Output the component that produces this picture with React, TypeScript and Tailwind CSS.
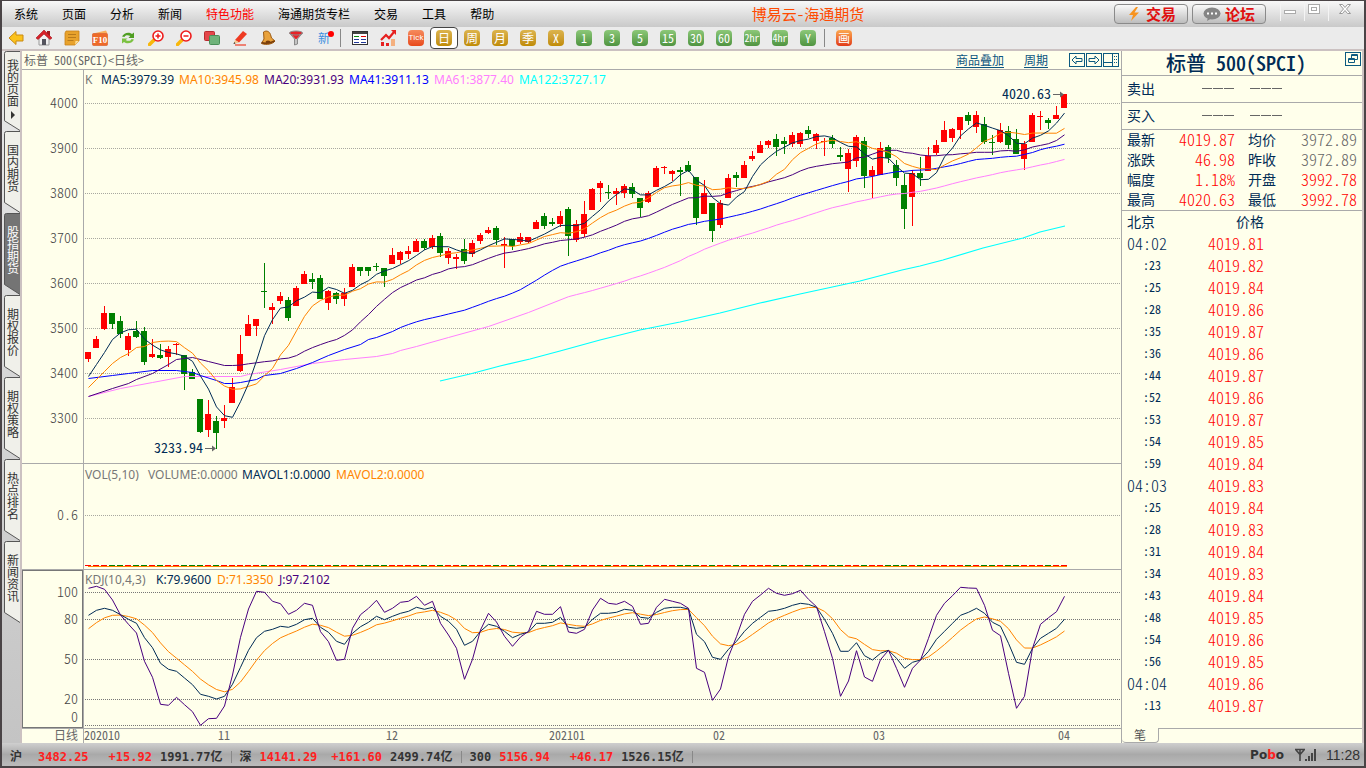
import { useState } from "react";
import type { ReactNode } from "react";

const CJK = "font-['Noto_Sans_CJK_SC',sans-serif] [font-feature-settings:'hwid']";

const UP = "#ff0000";
const DOWN = "#008000";
const NAVY = "#002b55";
const ORANGE = "#ff8400";
const PURPLE = "#48007e";

// high, body top, body bottom, low (chart y) and direction
type Candle = [number, number, number, number, 0 | 1];

const candles: Candle[] = [
  [352, 352, 359, 362, 1], [336, 339, 348, 348, 1], [306, 313, 329, 330, 1], [313, 313, 324, 329, 0],
  [316, 321, 334, 338, 0], [333, 336, 350, 356, 1], [321, 331, 337, 338, 0], [327, 331, 362, 365, 0],
  [339, 354, 357, 358, 1], [344, 355, 358, 359, 0], [346, 349, 357, 367, 1], [343, 344, 345, 355, 1],
  [355, 355, 374, 390, 0], [369, 372, 379, 379, 0], [399, 399, 432, 433, 0], [400, 414, 430, 437, 1],
  [416, 421, 433, 449, 0], [405, 418, 421, 428, 1], [378, 387, 403, 403, 1], [335, 354, 371, 372, 1],
  [315, 324, 336, 336, 1], [319, 319, 326, 336, 1], [263, 291, 292, 308, 0], [303, 307, 310, 324, 1],
  [292, 296, 301, 304, 1], [297, 300, 318, 321, 0], [286, 288, 306, 306, 1], [271, 274, 284, 284, 1],
  [273, 279, 282, 289, 0], [275, 278, 299, 299, 0], [290, 291, 303, 310, 1], [292, 293, 299, 304, 0],
  [288, 293, 299, 306, 1], [264, 267, 287, 287, 1], [267, 267, 271, 276, 0], [267, 267, 271, 276, 0],
  [263, 266, 267, 271, 0], [268, 268, 276, 287, 0], [248, 255, 264, 264, 1], [251, 252, 260, 264, 1],
  [246, 251, 254, 259, 1], [239, 241, 252, 252, 1], [239, 241, 248, 250, 0], [235, 238, 247, 249, 1],
  [233, 236, 253, 257, 0], [248, 251, 258, 264, 1], [254, 257, 259, 269, 1], [239, 249, 261, 264, 0],
  [240, 243, 254, 257, 1], [233, 235, 241, 244, 1], [227, 230, 233, 234, 1], [226, 228, 240, 245, 0],
  [237, 244, 246, 268, 1], [239, 239, 246, 250, 0], [233, 237, 242, 244, 1], [237, 237, 242, 243, 1],
  [220, 222, 229, 229, 1], [213, 216, 226, 229, 0], [218, 222, 224, 226, 0], [211, 216, 224, 227, 1],
  [207, 209, 236, 256, 0], [220, 224, 240, 242, 1], [201, 214, 234, 237, 1], [188, 189, 210, 210, 1],
  [181, 183, 188, 202, 1], [185, 192, 193, 199, 0], [188, 191, 194, 205, 1], [184, 186, 193, 198, 1],
  [183, 187, 194, 198, 0], [198, 198, 208, 217, 0], [191, 193, 202, 203, 1], [166, 168, 187, 187, 1],
  [166, 167, 168, 174, 1], [170, 171, 174, 181, 1], [167, 170, 172, 196, 0], [161, 165, 171, 172, 0],
  [177, 177, 218, 225, 0], [180, 193, 214, 214, 1], [203, 203, 231, 242, 0], [200, 203, 225, 228, 1],
  [174, 178, 198, 198, 1], [172, 175, 178, 187, 0], [161, 165, 178, 178, 1], [151, 156, 159, 161, 1],
  [141, 145, 153, 153, 1], [140, 141, 145, 148, 1], [134, 139, 147, 156, 0], [137, 141, 144, 154, 0],
  [132, 135, 144, 147, 1], [132, 133, 144, 147, 1], [126, 130, 134, 138, 0], [133, 134, 141, 149, 1],
  [138, 141, 142, 156, 1], [135, 138, 144, 148, 0], [147, 155, 157, 161, 0], [149, 153, 169, 192, 1],
  [135, 137, 161, 167, 1], [137, 141, 176, 188, 0], [166, 170, 176, 198, 1], [142, 148, 175, 175, 1],
  [145, 147, 158, 163, 0], [160, 165, 178, 186, 0], [174, 185, 209, 229, 0], [170, 173, 197, 226, 1],
  [157, 173, 178, 186, 0], [147, 156, 171, 171, 1], [140, 145, 153, 155, 1], [121, 130, 142, 142, 1],
  [128, 129, 138, 142, 1], [117, 117, 130, 139, 1], [112, 115, 121, 125, 0], [111, 115, 127, 133, 1],
  [117, 124, 142, 144, 0], [135, 142, 143, 155, 0], [123, 130, 142, 143, 1], [126, 131, 145, 149, 0],
  [129, 139, 154, 154, 0], [141, 144, 159, 170, 1], [113, 115, 142, 142, 1], [111, 116, 117, 130, 1],
  [118, 120, 123, 129, 0], [106, 115, 119, 119, 1], [94, 94, 108, 108, 1],
];

const barX = (i: number) => 88 + i * 8;
const toPoints = (p: number[][]) => p.map(([i, y]) => `${barX(i) + 0.5},${(y + 0.5).toFixed(1)}`).join(" ");

// the first bars have no full window yet, so each average starts from known points
function average(n: number, seed: number[][]) {
  const closes = candles.map((c) => (c[4] ? c[1] : c[2]));
  const rest: number[][] = [];
  for (let i = n - 1; i < closes.length; i++) {
    rest.push([i, closes.slice(i - n + 1, i + 1).reduce((a, b) => a + b, 0) / n]);
  }
  return toPoints([...seed, ...rest]);
}

const averages = [
  { cor: "#ff80ff", pts: average(61, [[0, 396], [4, 388], [8, 382], [12, 376], [19, 376], [20, 374], [24, 369], [28, 363], [32, 359], [36, 356], [38, 353], [39, 350], [41, 346], [45, 337], [50, 326], [55, 312]]) },
  { cor: "#0000ff", pts: average(41, [[0, 378], [3, 375], [5, 373], [8, 370], [11, 370], [12, 371], [13, 372], [14, 375], [16, 380], [17, 383], [18, 383], [19, 382], [21, 379], [22, 375], [24, 373], [26, 368], [28, 362], [30, 355], [32, 349], [34, 344], [35, 339], [36, 337], [38, 331], [39, 327]]) },
  { cor: PURPLE, pts: average(20, [[0, 396], [3, 388], [5, 383], [6, 379], [8, 373], [10, 364], [11, 359], [13, 357], [15, 361], [17, 365], [18, 365]]) },
  { cor: ORANGE, pts: average(10, [[0, 387], [1, 379], [2, 371], [3, 363], [4, 357], [5, 353], [6, 347], [7, 346], [8, 342]]) },
  { cor: NAVY, pts: average(5, [[0, 376], [1, 364], [2, 352], [3, 339]]) },
];

const ma122 = "440,381 470,374 500,366 530,359 560,351 600,340 640,330 680,322 720,313 760,303 800,294 860,281 902,270 920,266 943,260 983,248 1023,238 1040,232 1065,226";

// thirds of a pixel below the top of the panel
const kRaw = [
  166, 151, 145, 151, 164, 178, 190, 233, 263, 310, 328, 334, 354, 374, 403, 409, 417, 409, 373, 322, 271, 233, 214, 208, 199,
  202, 193, 179, 175, 202, 217, 244, 253, 220, 200, 187, 169, 179, 169, 160, 154, 142, 148, 142, 169, 184, 208, 256, 244, 214,
  193, 199, 214, 233, 223, 216, 190, 190, 187, 172, 202, 205, 202, 178, 160, 160, 157, 148, 151, 172, 175, 157, 145, 142, 142,
  147, 223, 245, 292, 298, 268, 244, 214, 190, 172, 154, 151, 145, 136, 130, 133, 142, 178, 220, 274, 274, 248, 287, 300, 280,
  271, 295, 325, 307, 300, 274, 238, 214, 190, 166, 157, 145, 160, 187, 199, 250, 307, 313, 265, 235, 220, 205, 178,
];
const jRaw = [
  85, 79, 88, 120, 165, 193, 219, 304, 352, 433, 436, 412, 434, 455, 496, 476, 475, 438, 345, 232, 147, 94, 97, 124, 131, 163,
  151, 130, 136, 215, 245, 301, 298, 205, 164, 145, 121, 157, 145, 127, 124, 109, 136, 124, 190, 225, 265, 358, 298, 210, 160,
  186, 229, 259, 231, 214, 154, 163, 163, 140, 216, 220, 208, 150, 115, 130, 133, 124, 139, 193, 190, 142, 118, 124, 130, 145,
  325, 337, 421, 387, 290, 230, 163, 124, 105, 85, 100, 106, 101, 91, 118, 140, 215, 295, 409, 363, 272, 351, 364, 299, 271,
  325, 382, 325, 300, 235, 166, 130, 107, 82, 84, 85, 136, 211, 227, 340, 445, 409, 265, 193, 173, 155, 109,
];
const dRaw: number[] = [];
kRaw.forEach((k, i) => dRaw.push(i === 0 ? 206 : (dRaw[i - 1] * 2 + k) / 3));
const kdjPoints = (raw: number[]) => toPoints(raw.map((v, i) => [i, 560 + v / 3 - 0.5]));

const menus = ["系统", "页面", "分析", "新闻", "特色功能", "海通期货专栏", "交易", "工具", "帮助"];
const sideTabs = ["我的页面", "国内期货", "股指期货", "期权报价", "期权策略", "热点排名", "新闻资讯"];

const quotes = [
  ["最新", "4019.87", "均价", "3972.89"],
  ["涨跌", "46.98", "昨收", "3972.89"],
  ["幅度", "1.18%", "开盘", "3992.78"],
  ["最高", "4020.63", "最低", "3992.78"],
];

const ticks = [
  ["04:02", "4019.81"], [":23", "4019.82"], [":25", "4019.84"], [":28", "4019.86"], [":35", "4019.87"],
  [":36", "4019.86"], [":44", "4019.87"], [":52", "4019.86"], [":53", "4019.87"], [":54", "4019.85"],
  [":59", "4019.84"], ["04:03", "4019.83"], [":25", "4019.84"], [":28", "4019.83"], [":31", "4019.84"],
  [":34", "4019.83"], [":43", "4019.84"], [":48", "4019.85"], [":54", "4019.86"], [":56", "4019.85"],
  ["04:04", "4019.86"], [":13", "4019.87"],
];

const indices = [
  { nome: "沪", valor: "3482.25", dif: "+15.92", total: "1991.77亿" },
  { nome: "深", valor: "14141.29", dif: "+161.60", total: "2499.74亿" },
  { nome: "300", valor: "5156.94", dif: "+46.17", total: "1526.15亿" },
];

const tools: { nome: string; icon: ReactNode }[] = [
  { nome: "后退", icon: <path d="M1 8 8 1.5V5h7v6H8v3.5Z" fill="#fbc21c" stroke="#c98a12" /> },
  {
    nome: "主页",
    icon: (
      <>
        <path d="M3 8v7h10V8L8 3Z" fill="#f1f1f1" stroke="#9a9a9a" />
        <path d="M11 1h3v5h-3z" fill="#a01c20" />
        <path d="M0 8 8 0l8 8-2 1.500L8 4 2 9.500Z" fill="#d8222a" stroke="#a3161c" strokeWidth=".6" />
        <path d="M6 9h4v6H6z" fill="#54545e" />
      </>
    ),
  },
  {
    nome: "资讯",
    icon: (
      <>
        <path d="M2 1h13v10l-4 4H1V3Z" fill="#e8a22c" stroke="#c98218" strokeWidth=".8" />
        <path d="M4 4.500h8M4 7.500h8M3.500 10.500h6" stroke="#b87a1c" />
        <path d="m11 15 .5-4H15Z" fill="#fbdc94" />
      </>
    ),
  },
  {
    nome: "F10",
    icon: (
      <>
        <path d="m1 3.500 13-3 1.500 3Z" fill="#f9b05c" />
        <rect x="0.500" y="3.500" width="15" height="12" rx="1" fill="#ee6a28" stroke="#d9541c" strokeWidth=".6" />
        <text x="8" y="13" textAnchor="middle" fontSize="9" fontWeight="700" fill="#fff" className="font-['Liberation_Serif',serif]">F10</text>
      </>
    ),
  },
  {
    nome: "刷新",
    icon: (
      <>
        <path d="M2 6.500C4 2.500 9 1.500 12 4l2-1.500V8H8.500l1.800-2C8 4.500 5 5 4.500 7Z" fill="#4f9e22" />
        <path d="M14 9.500c-2 4-7 5-10 2.500L2 13.500V8.500h5.500L5.700 10c2.300 1.500 5.300 1 5.800-1Z" fill="#7cc242" />
      </>
    ),
  },
  {
    nome: "放大",
    icon: (
      <>
        <path d="m6 10-4.500 4.500" stroke="#f8b80c" strokeWidth="3.500" strokeLinecap="round" />
        <circle cx="10" cy="6" r="5" fill="#fff" stroke="#ee1c1c" strokeWidth="1.600" />
        <path d="M7.500 6h5M10 3.500v5" stroke="#ee1c1c" strokeWidth="1.500" />
      </>
    ),
  },
  {
    nome: "缩小",
    icon: (
      <>
        <path d="m6 10-4.500 4.500" stroke="#f8b80c" strokeWidth="3.500" strokeLinecap="round" />
        <circle cx="10" cy="6" r="5" fill="#fff" stroke="#ee1c1c" strokeWidth="1.600" />
        <path d="M7.500 6h5" stroke="#ee1c1c" strokeWidth="1.500" />
      </>
    ),
  },
  {
    nome: "叠加",
    icon: (
      <>
        <rect x="0.500" y="1.500" width="10" height="9" rx="1" fill="#e4474a" stroke="#b82c30" />
        <rect x="5.500" y="5.500" width="10" height="9" rx="1" fill="#6fb37a" stroke="#4a8f58" />
      </>
    ),
  },
  {
    nome: "画线",
    icon: (
      <>
        <path d="M3 15h11" stroke="#ef3b24" strokeWidth="1.200" />
        <path d="m3 10 8-9 4 3-8 8.500Z" fill="#ee3a22" />
        <path d="M3 10 1.500 14 7 12.500Z" fill="#f4c890" />
        <path d="M2.200 12 1.500 14l2-.6Z" fill="#333" />
      </>
    ),
  },
  {
    nome: "预警",
    icon: (
      <>
        <path d="M3.500 2c3-2 6-.5 7 2.500l1 3.500 3.500 3c-2 3-9 4.500-13.500 2.500L4 9Z" fill="#e9a23c" stroke="#9c5a12" />
        <path d="M1.500 12.500c4 1.500 9 .5 13-1.500" stroke="#7a3f0c" strokeWidth="1.600" />
        <ellipse cx="8" cy="12" rx="2.500" ry="1.500" fill="#7a3f0c" />
      </>
    ),
  },
  {
    nome: "筛选",
    icon: (
      <>
        <path d="M1.500 3 6.500 9v6l3-1V9l5-6Z" fill="#c4c4c4" stroke="#777" strokeWidth=".8" />
        <path d="M4 5h8L8.500 9h-1Z" fill="#e62228" />
        <ellipse cx="8" cy="3" rx="6.500" ry="2" fill="#e62228" stroke="#8b8b8b" />
      </>
    ),
  },
];

const periods = ["日", "周", "月", "季", "X", "1", "3", "5", "15", "30", "60", "2hr", "4hr", "Y"];

function Icon({ children }: { children: ReactNode }) {
  return (
    <svg viewBox="0 0 16 16" className="size-4" fill="none" aria-hidden="true">
      {children}
    </svg>
  );
}

function ToolButton({ nome, active, onClick, children }: { nome: string; active?: boolean; onClick?: () => void; children: ReactNode }) {
  return (
    <button
      aria-label={nome}
      onClick={onClick}
      className={`relative flex h-[22px] w-7 items-center justify-center ${active ? "rounded-sm border border-[#444] bg-white" : ""}`}
    >
      {children}
    </button>
  );
}

function tileColor(p: string) {
  if ("日周月季X".includes(p)) return "bg-linear-to-b from-[#dcb44c] to-[#c08c00]";
  return "bg-linear-to-b from-[#8cc878] to-[#4f9440]";
}

function PriceChart() {
  return (
    <svg viewBox="22 70 1099 394" className={`block w-full ${CJK}`} role="img" aria-label="K线图">
      {[4000, 3900, 3800, 3700, 3600, 3500, 3400, 3300].map((v, n) => (
        <g key={v}>
          <text x="78" y={108 + n * 45} textAnchor="end" fontSize="14" fontWeight="300" fill="#444">{v}</text>
          <path d={`M85 ${103.5 + n * 45}H1120`} stroke="#a8a8a0" strokeDasharray="1 1" shapeRendering="crispEdges" />
        </g>
      ))}
      <path d="M83.500 70V464" stroke="#aaa" />
      <path d="M22 463.500H1121" stroke="#aaa" />
      {candles.map(([hi, top, bottom, lo, up], i) => (
        <g key={i} fill={up ? UP : DOWN} shapeRendering="crispEdges">
          <rect x={barX(i)} y={hi} width="1" height={lo - hi} />
          <rect x={barX(i) - 3} y={top} width="6" height={bottom - top} />
        </g>
      ))}
      <polyline points={ma122} fill="none" stroke="#00ffff" strokeWidth="1.200" />
      {averages.map((a) => (
        <polyline key={a.cor} points={a.pts} fill="none" stroke={a.cor} />
      ))}
      <g fontSize="12" className="font-['Noto_Sans',sans-serif]">
        <text x="85" y="84" fill="#777">K</text>
        <text x="101" y="84" fill={NAVY}>MA5:3979.39</text>
        <text x="179" y="84" fill={ORANGE}>MA10:3945.98</text>
        <text x="264" y="84" fill={PURPLE}>MA20:3931.93</text>
        <text x="349" y="84" fill="#0000ff">MA41:3911.13</text>
        <text x="434" y="84" fill="#ff80ff">MA61:3877.40</text>
        <text x="519" y="84" fill="#00ffff">MA122:3727.17</text>
      </g>
      <g fontSize="14" fill={NAVY}>
        <text x="1002" y="99">4020.63</text>
        <text x="154" y="453">3233.94</text>
      </g>
      <path d="M1053 94.500h10M205 448.500h10" stroke="#666" />
      <path d="m1060 91.500 4 3-4 3ZM212 445.500l4 3-4 3Z" fill="#666" />
    </svg>
  );
}

function VolumeChart() {
  return (
    <svg viewBox="22 464 1099 106" className={`block w-full ${CJK}`} role="img" aria-label="成交量">
      <text x="78" y="520" textAnchor="end" fontSize="14" fontWeight="300" fill="#444">0.6</text>
      <path d="M85 515.500H1120" stroke="#a8a8a0" strokeDasharray="1 1" shapeRendering="crispEdges" />
      <path d="M83.500 464V570M22 569.500H1121" stroke="#aaa" />
      {candles.map((c, i) => (
        <rect key={i} x={barX(i) - 3} y="565" width="6" height="1" fill={c[4] ? UP : DOWN} shapeRendering="crispEdges" />
      ))}
      <path d="M88 566.500H1067" stroke={ORANGE} />
      <g fontSize="12" className="font-['Noto_Sans',sans-serif]">
        <text x="85" y="479" fill="#777">VOL(5,10)</text>
        <text x="148" y="479" fill="#777">VOLUME:0.0000</text>
        <text x="242" y="479" fill={NAVY}>MAVOL1:0.0000</text>
        <text x="336" y="479" fill={ORANGE}>MAVOL2:0.0000</text>
      </g>
    </svg>
  );
}

function KdjChart() {
  const levels = [[100, 592], [80, 619], [50, 659], [20, 699], [0, 725]];
  const months: [string, number][] = [["202010", 84], ["11", 218], ["12", 386], ["202101", 549], ["02", 713], ["03", 873], ["04", 1058]];
  return (
    <svg viewBox="22 570 1099 173" className={`block w-full ${CJK}`} role="img" aria-label="KDJ">
      {levels.map(([v, y]) => (
        <g key={v}>
          <text x="78" y={v === 0 ? 722 : y + 5} textAnchor="end" fontSize="14" fontWeight="300" fill="#444">{v}</text>
          <path d={`M85 ${y + 0.5}H1120`} stroke="#777" strokeDasharray="1 1" shapeRendering="crispEdges" />
        </g>
      ))}
      <rect x="22.500" y="570.500" width="60" height="157" fill="none" stroke="#777" />
      <path d="M83.500 570V743M22 728.500H1121" stroke="#aaa" />
      <polyline points={kdjPoints(dRaw)} fill="none" stroke={ORANGE} />
      <polyline points={kdjPoints(kRaw)} fill="none" stroke={NAVY} />
      <polyline points={kdjPoints(jRaw)} fill="none" stroke={PURPLE} />
      <g fontSize="12" className="font-['Noto_Sans',sans-serif]">
        <text x="85" y="584" fill="#777">KDJ(10,4,3)</text>
        <text x="156" y="584" fill={NAVY}>K:79.9600</text>
        <text x="217" y="584" fill={ORANGE}>D:71.3350</text>
        <text x="279" y="584" fill={PURPLE}>J:97.2102</text>
      </g>
      <g fontSize="12" fill="#666">
        <text x="78" y="740" textAnchor="end">日线</text>
        {months.map(([m, x]) => (
          <text key={m} x={x} y="740">{m}</text>
        ))}
      </g>
    </svg>
  );
}

export default function App() {
  const [period, setPeriod] = useState("日");
  const [tab, setTab] = useState("股指期货");

  return (
    <div className={`flex min-h-screen flex-col border-x-2 border-t border-b-2 border-[#4a4446] bg-[#ebebeb] text-xs text-black ${CJK}`}>
      <header className="flex h-[26px] items-center bg-linear-to-b from-[#f8f8f8] to-[#c9c9c9] pl-3">
        <nav className="flex gap-6">
          {menus.map((m) => (
            <a key={m} href="#" className={m === "特色功能" ? "text-[#ff0000]" : ""}>{m}</a>
          ))}
        </nav>
        <h1 className="flex-1 pl-2 text-center text-[15px] text-[#ff4a00]">博易云-海通期货</h1>
        <div className="flex gap-1">
          <button className="flex h-5 w-[74px] items-center justify-center gap-1 rounded border border-[#8a8a8a] bg-linear-to-b from-[#fafafa] to-[#bdbdbd] text-[15px] font-bold text-[#e01010]">
            <Icon><path d="m10 1-7 8h4l-2 6 8-8.500H8.500L12 1Z" fill="#f7931e" /></Icon>
            交易
          </button>
          <button className="flex h-5 w-[74px] items-center justify-center gap-1 rounded border border-[#8a8a8a] bg-linear-to-b from-[#fafafa] to-[#bdbdbd] text-[15px] font-bold text-[#e01010]">
            <svg viewBox="0 0 18 16" className="h-4 w-[18px]" aria-hidden="true">
              <ellipse cx="9" cy="7.500" rx="8.500" ry="6" fill="#858585" />
              <path d="m5 11-1 4 5-3Z" fill="#858585" />
              <path d="M4 7.500h2M8 7.500h2M12 7.500h2" stroke="#fff" strokeWidth="2" />
            </svg>
            论坛
          </button>
        </div>
        <div className="flex h-full w-[98px] items-start justify-end pr-2">
          <button aria-label="最小化" className="h-5 w-6 border-l border-[#f4f4f4]">
            <svg viewBox="0 0 24 20" className="h-5 w-6"><rect x="3.500" y="9.500" width="11" height="3" fill="#fff" stroke="#aaa" /></svg>
          </button>
          <button aria-label="最大化" className="h-5 w-6 border-l border-[#f4f4f4]">
            <svg viewBox="0 0 24 20" className="h-5 w-6" fill="#fff" stroke="#aaa"><rect x="3.500" y="3.500" width="11" height="9" /><rect x="6.500" y="6.500" width="5" height="3" /></svg>
          </button>
          <button aria-label="关闭" className="h-5 w-7 border-l border-[#f4f4f4]">
            <svg viewBox="0 0 28 20" className="h-5 w-7" fill="#fff" stroke="#999"><path d="M10.500 3.500h3l2.500 3 2.500-3h3l-4 4.500 4 4.500h-3l-2.500-3-2.500 3h-3l4-4.500Z" /></svg>
          </button>
        </div>
      </header>

      <div className="flex h-[22px] items-center">
        {tools.map((t) => (
          <ToolButton key={t.nome} nome={t.nome}><Icon>{t.icon}</Icon></ToolButton>
        ))}
        <ToolButton nome="新">
          <span className="text-xs leading-4 text-[#3b8fe0]">新</span>
          <span className="absolute top-1 right-1 size-1.5 rounded-full bg-[#ff0000]" />
        </ToolButton>
        <span className="flex w-2"><i className="ml-0.5 h-[18px] w-px bg-[#888]" /></span>
        <ToolButton nome="报价">
          <Icon>
            <rect x="0.500" y="1.500" width="15" height="13" fill="#fff" stroke="#333" />
            <path d="M1 3h14" stroke="#444" strokeWidth="2" />
            <path d="M2 6.500h5" stroke="#0a8a0a" /><path d="M9 6.500h5" stroke="#e00000" />
            <path d="M2 9.500h5M9 9.500h5M2 12.500h5M9 12.500h5" stroke="#223a9a" />
          </Icon>
        </ToolButton>
        <ToolButton nome="走势">
          <Icon>
            <path d="M1 16v-4h3v4ZM6 16v-3h3v3Z" fill="#e62020" /><path d="M11 16V9h4v7Z" fill="#f4b080" />
            <path d="m1 10 5-5 3 3 5-6" stroke="#e62020" strokeWidth="2.200" />
            <path d="M11 0h5v5Z" fill="#e62020" />
          </Icon>
        </ToolButton>
        <ToolButton nome="Tick">
          <span className="flex size-4 items-center justify-center rounded-sm bg-linear-to-b from-[#f58a5c] to-[#e84818] font-['Roboto',sans-serif] text-[8px] leading-4 text-white">Tick</span>
        </ToolButton>
        {periods.map((p) => (
          <ToolButton key={p} nome={p} active={p === period} onClick={() => setPeriod(p)}>
            <span className={`flex size-4 items-center justify-center rounded-sm leading-4 text-white ${p.length > 2 ? "text-[10px]" : "text-xs"} ${tileColor(p)}`}>{p}</span>
          </ToolButton>
        ))}
        <span className="flex w-2"><i className="ml-0.5 h-[18px] w-px bg-[#888]" /></span>
        <ToolButton nome="画">
          <span className="flex size-4 items-center justify-center rounded-sm bg-linear-to-b from-[#fba850] to-[#e03818] leading-4 text-white">画</span>
        </ToolButton>
      </div>

      <div className="flex flex-1 border-t-2 border-[#cbc1c1]">
        <nav className="w-[18px] shrink-0 bg-linear-to-b from-[#e8e8e8] to-[#c4c4c4]">
          {sideTabs.map((t, n) => (
            <button
              key={t}
              onClick={() => setTab(t)}
              className={`relative flex w-full flex-col items-center pl-[3px] leading-3 ${n === 0 ? "h-20 pt-2" : "h-[82px] pt-[13px]"} ${t === tab ? "text-white" : "text-[#333]"}`}
            >
              <svg viewBox="0 0 18 82" preserveAspectRatio="none" className="absolute inset-0 size-full" aria-hidden="true">
                <path d="M18 .5H4.500Q2.500.5 2.500 2.500V71.500L18 81.500" fill={t === tab ? "#747474" : "#f0f0ea"} stroke="#555" />
              </svg>
              <span className="relative [writing-mode:vertical-rl]">{t}</span>
              {n === 0 && (
                <svg viewBox="0 0 4 8" className="relative mt-1 h-2 w-1" aria-hidden="true"><path d="M0 0v8l4-4Z" fill="#333" /></svg>
              )}
            </button>
          ))}
        </nav>

        <main className="min-w-0 flex-1 border-l-2 border-[#cbc1c1] bg-[#ffffeb]">
          <div className="flex h-[19px] items-center border-b border-[#aaa] px-0.5 text-[#666]">
            <h2 className="flex-1">标普 500(SPCI)&lt;日线&gt;</h2>
            <a href="#" className="mr-5 text-[#0c5580] underline underline-offset-2">商品叠加</a>
            <a href="#" className="mr-5 text-[#0c5580] underline underline-offset-2">周期</a>
            <svg viewBox="0 0 51 15" className="h-[15px] w-[51px]" fill="none" stroke="#0c5a80" aria-hidden="true">
              <rect x="1.500" y="0.500" width="15" height="13" />
              <rect x="18.500" y="0.500" width="15" height="13" />
              <rect x="35.500" y="0.500" width="15" height="13" />
              <path d="M4 7 8 3v2.500h6v3H8V11ZM31 7l-4-4v2.500h-6v3h6V11Z" />
              <path d="M36 9.500h8.500V1M44.500 9v4" />
              <path d="M46 3.500h4M46 6.500h4M46 9.500h4" strokeDasharray="1 1" />
            </svg>
          </div>
          <PriceChart />
          <VolumeChart />
          <KdjChart />
        </main>

        <aside className="flex w-[243px] shrink-0 flex-col border-r-2 border-l border-r-[#cbc1c1] border-l-[#aaa] bg-[#ffffeb] text-sm text-[#002b55]">
          <div className="relative flex h-[25px] items-center justify-center border-b border-[#aaa] pr-3">
            <h2 className="text-xl leading-6 font-medium">标普 500(SPCI)</h2>
            <button aria-label="窗口" className="absolute top-px right-px">
              <svg viewBox="0 0 16 14" className="h-3.5 w-4" fill="none" stroke="#0c5a80">
                <rect x="0.500" y="0.500" width="15" height="13" />
                <path d="M6.500 6V2.500h6v5H10M6.500 3.500h6M3.500 6.500h6v4h-6ZM3.500 7.500h6" />
              </svg>
            </button>
          </div>
          {["卖出", "买入"].map((s) => (
            <div key={s} className="flex h-[27px] items-center border-b border-[#aaa] pb-0.5 pl-[5px]">
              <span className="w-[75px]">{s}</span>
              <span className="flex gap-4">
                {[0, 1].map((g) => (
                  <svg key={g} viewBox="0 0 32 3" className="h-[3px] w-8" aria-hidden="true"><path d="M0 1.500h10M11 1.500h10M22 1.500h10" stroke="#666" /></svg>
                ))}
              </span>
            </div>
          ))}
          <div className="border-b border-[#aaa] pb-px">
            <table className="w-full table-fixed">
              <tbody>
                {quotes.map(([a, b, c, d], n) => (
                  <tr key={a} className={n === 0 ? "h-[19px] leading-[19px]" : "h-5 leading-5"}>
                    <th className="w-[34px] p-0 pl-[5px] text-left font-normal">{a}</th>
                    <td className="w-[79px] p-0 text-right text-base leading-[19px] font-light text-[#ff0000]">{b}</td>
                    <th className="w-[42px] p-0 pl-[13px] text-left font-normal">{c}</th>
                    <td className={`p-0 pr-[5px] text-right text-base leading-[19px] font-light ${n < 2 ? "text-[#666]" : "text-[#ff0000]"}`}>{d}</td>
                  </tr>
                ))}
              </tbody>
            </table>
          </div>
          <table className="w-full table-fixed">
            <thead>
              <tr className="h-[21px] leading-[21px]">
                <th className="w-[45px] p-0 pl-[5px] text-left font-normal">北京</th>
                <th className="w-[97px] p-0 text-right font-normal">价格</th>
                <th />
              </tr>
            </thead>
            <tbody>
              {ticks.map(([time, price]) => (
                <tr key={time + price} className="h-[22px] leading-[22px]">
                  <td className={`p-0 text-right ${time.length > 3 ? "text-base leading-[22px] font-light" : "pr-1.5 text-xs leading-[22px]"}`}>{time}</td>
                  <td className="p-0 text-right text-base leading-[22px] font-light text-[#ff0000]">{price}</td>
                  <td />
                </tr>
              ))}
            </tbody>
          </table>
          <div className="mt-auto flex h-[15px] text-xs leading-3">
            <button className="h-[15px] w-[37px] rounded-b border-r border-b border-[#aaa] text-[#555]">笔</button>
            <span className="flex-1 border-t border-[#aaa]" />
          </div>
        </aside>
      </div>

      <footer className="flex h-[23px] items-center bg-linear-to-b from-[#cfcfcf] via-[#a9a9a9] to-[#bcbcbc] pr-1 pl-2 font-['DejaVu_Sans_Mono','Noto_Sans_CJK_SC',monospace] font-bold text-[#333]">
        {indices.map((x) => (
          <div key={x.nome} className="flex items-center pt-1">
            <span>{x.nome}</span>
            <span className={`text-[#ff2020] ${x.nome === "沪" ? "ml-4" : "ml-2"}`}>{x.valor}</span>
            <span className={`text-[#ff2020] ${x.nome === "深" ? "ml-3.5" : "ml-5"}`}>{x.dif}</span>
            <span className="ml-2">{x.total}</span>
            <i className="mx-2 h-3 w-px bg-[#888]" />
          </div>
        ))}
        <span className="ml-auto font-['DejaVu_Sans',sans-serif]">Po<span className="text-[#ff2020]">b</span>o</span>
        <svg viewBox="0 0 22 14" className="ml-2.5 h-3.5 w-[22px]" stroke="#444" fill="none" aria-hidden="true">
          <path d="M1 1.500h10M2 2l4 4.500L10 2M6 1v12" strokeWidth="1.600" />
          <path d="M12 13v-2M15 13V8M18 13V5M21 13V1" strokeWidth="2" />
        </svg>
        <time className="ml-2.5 font-['Liberation_Sans',sans-serif] text-sm font-normal">11:28</time>
      </footer>
    </div>
  );
}
